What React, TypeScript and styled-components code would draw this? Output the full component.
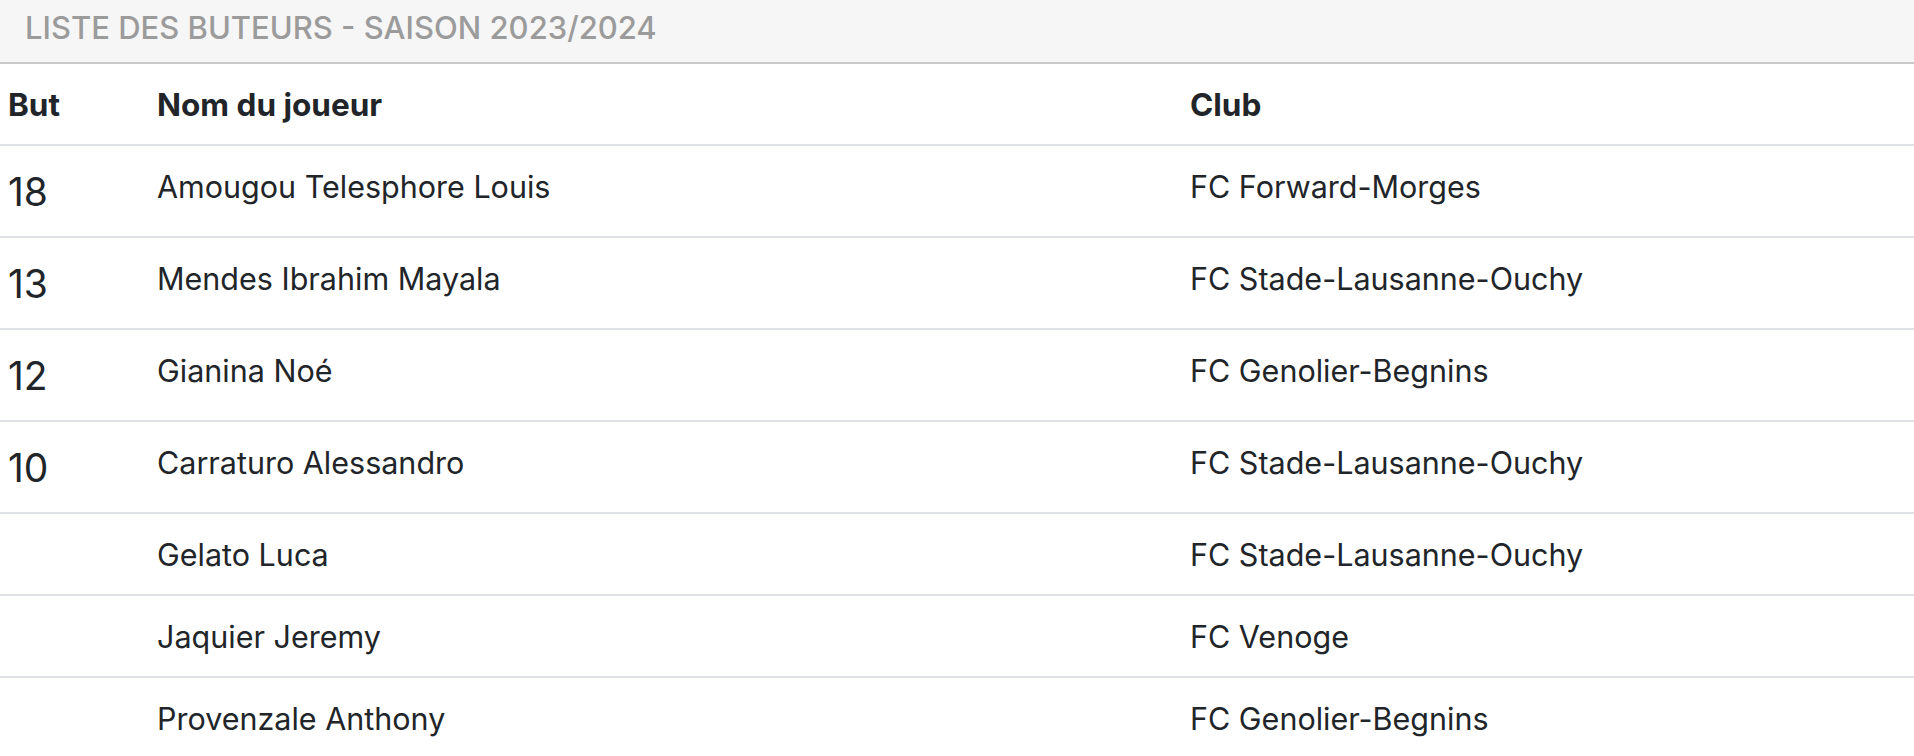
import React from 'react'
import styled, { createGlobalStyle } from 'styled-components'

const GlobalStyle = createGlobalStyle`
  html, body {
    margin: 0;
    padding: 0;
    background: #fff;
  }
  body {
    font-family: Inter, 'Noto Sans', sans-serif;
    color: #212529;
  }
`

const Wrapper = styled.section`
  width: 100%;
`

const TitleBar = styled.header`
  height: 64px;
  box-sizing: border-box;
  padding: 5px 25px 11px;
  background: #f6f6f6;
  border-bottom: 2px solid #c9c9c9;
`

const Title = styled.h2`
  margin: 0;
  font-family: Inter, 'Noto Sans', sans-serif;
  font-weight: 500;
  font-size: 31px;
  line-height: 46px;
  color: #9b9b9b;
  text-transform: uppercase;
  white-space: nowrap;
`

const Table = styled.table`
  width: 100%;
  border-collapse: collapse;
  table-layout: fixed;
  vertical-align: top;
`

const HeadCell = styled.th`
  text-align: left;
  font-weight: 700;
  font-size: 31.5px;
  line-height: 45px;
  padding: 18px 8px 17px;
  border-bottom: 2px solid #dee2e6;
`

const Row = styled.tr`
  border-bottom: 2px solid #dee2e6;
`

const Cell = styled.td`
  font-size: 30.5px;
  line-height: 45px;
  padding: 17.5px 8px;
  vertical-align: top;
  white-space: nowrap;
`

const GoalCell = styled(Cell)`
  font-size: 39px;
  line-height: 55px;
`

interface Scorer {
  goals?: number
  name: string
  club: string
}

const scorers: Scorer[] = [
  { goals: 18, name: 'Amougou Telesphore Louis', club: 'FC Forward-Morges' },
  { goals: 13, name: 'Mendes Ibrahim Mayala', club: 'FC Stade-Lausanne-Ouchy' },
  { goals: 12, name: 'Gianina Noé', club: 'FC Genolier-Begnins' },
  { goals: 10, name: 'Carraturo Alessandro', club: 'FC Stade-Lausanne-Ouchy' },
  { name: 'Gelato Luca', club: 'FC Stade-Lausanne-Ouchy' },
  { name: 'Jaquier Jeremy', club: 'FC Venoge' },
  { name: 'Provenzale Anthony', club: 'FC Genolier-Begnins' },
]

export default function App() {
  return (
    <Wrapper>
      <GlobalStyle />
      <TitleBar>
        <Title>Liste des buteurs - Saison 2023/2024</Title>
      </TitleBar>
      <Table>
        <colgroup>
          <col style={{ width: 149 }} />
          <col style={{ width: 1033 }} />
          <col />
        </colgroup>
        <thead>
          <tr>
            <HeadCell>But</HeadCell>
            <HeadCell>Nom du joueur</HeadCell>
            <HeadCell>Club</HeadCell>
          </tr>
        </thead>
        <tbody>
          {scorers.map((s, i) => (
            <Row key={i}>
              {s.goals ? <GoalCell>{s.goals}</GoalCell> : <Cell />}
              <Cell>{s.name}</Cell>
              <Cell>{s.club}</Cell>
            </Row>
          ))}
        </tbody>
      </Table>
    </Wrapper>
  )
}
